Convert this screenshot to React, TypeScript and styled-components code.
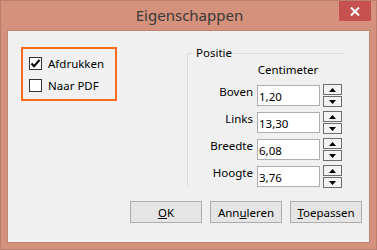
import React from 'react';
import styled, { createGlobalStyle } from 'styled-components';

const GlobalStyle = createGlobalStyle`
  html, body {
    margin: 0;
    padding: 0;
    background: #fff;
  }
  body {
    font-family: "Noto Sans", "Open Sans", sans-serif;
    font-size: 11.5px;
    color: #000;
  }
`;

const Window = styled.div`
  box-sizing: border-box;
  width: 377px;
  height: 250px;
  background: #d4917b;
  border: 1px solid #b97f6c;
  display: flex;
  flex-direction: column;
`;

const TitleBar = styled.div`
  position: relative;
  height: 29px;
  flex: none;
  display: flex;
  align-items: center;
  justify-content: center;
`;

const Title = styled.div`
  font-size: 15px;
  color: #3a3a3a;
  margin-top: -2px;
  margin-left: 2px;
`;

const CloseButton = styled.div`
  position: absolute;
  top: 0;
  right: 5px;
  width: 32px;
  height: 20px;
  background: #c75050;
  display: flex;
  align-items: center;
  justify-content: center;
`;

const Client = styled.div`
  flex: 1;
  margin: 0 6px 6px;
  background: #f0f0f0;
  border: 1px solid #bd8572;
  padding: 16px 7px 19px 13px;
  display: flex;
  flex-direction: column;
`;

const TopRow = styled.div`
  display: flex;
  align-items: flex-start;
`;

const Highlight = styled.div`
  box-sizing: border-box;
  width: 96px;
  height: 54px;
  border: 2px solid #f56b1c;
  padding: 8px 0 0 6px;
  display: flex;
  flex-direction: column;
  gap: 9px;
`;

const CheckRow = styled.label`
  display: flex;
  align-items: center;
  gap: 6px;
  height: 13px;
  white-space: nowrap;
`;

const Box = styled.span`
  box-sizing: border-box;
  width: 13px;
  height: 13px;
  border: 1px solid #333;
  background: #fff;
  display: flex;
  align-items: center;
  justify-content: center;
  flex: none;
`;

const Group = styled.fieldset`
  box-sizing: border-box;
  margin: -2px 0 0 70px;
  padding: 0;
  width: 157px;
  height: 142px;
  border: none;
  border-top: 1px solid #dcdcdc;
  border-left: 1px solid #dcdcdc;
  min-width: 0;
`;

const Legend = styled.legend`
  padding: 0 1px 0 2px;
  margin-left: 6px;
  line-height: 16px;
`;

const Fields = styled.div`
  display: grid;
  grid-template-columns: 66px 62px 19px;
  column-gap: 3px;
  row-gap: 5px;
  align-items: start;
`;

const Unit = styled.div`
  grid-column: 2 / 3;
  text-align: center;
  line-height: 16px;
  margin-top: 1px;
  margin-bottom: 2px;
  white-space: nowrap;
  justify-self: center;
`;

const Label = styled.div`
  grid-column: 1 / 2;
  text-align: right;
  line-height: 16px;
  margin-top: -1px;
  padding-right: 1px;
`;

const Input = styled.input`
  box-sizing: border-box;
  width: 63px;
  height: 21px;
  margin: 0;
  padding: 2px 0 0 1px;
  border: 1px solid #abadb3;
  background: #fff;
  font: inherit;
  color: #000;
  outline: none;
`;

const Spin = styled.div`
  display: flex;
  flex-direction: column;
  gap: 1px;
  margin-top: -1px;
  margin-left: 1px;
`;

const SpinButton = styled.div`
  box-sizing: border-box;
  width: 19px;
  height: 11px;
  border: 1px solid #6d6d6d;
  background: #f3f3f3;
  display: flex;
  align-items: center;
  justify-content: center;
`;

const ButtonRow = styled.div`
  margin-top: auto;
  display: flex;
  justify-content: flex-end;
  gap: 8px;
`;

const Button = styled.button`
  box-sizing: border-box;
  width: 72px;
  height: 22px;
  margin: 0;
  padding: 0;
  border: 1px solid #acacac;
  background: #e5e5e5;
  font: inherit;
  color: #000;
`;

const Check = () => (
  <svg width="11" height="11" viewBox="0 0 11 11">
    <path d="M1.5 5.5 L4 8.2 L9.5 2" fill="none" stroke="#000" strokeWidth="2" />
  </svg>
);

const Arrow: React.FC<{ down?: boolean }> = ({ down }) => (
  <svg width="7" height="4" viewBox="0 0 7 4">
    <path d={down ? 'M0 0 H7 L3.5 4 Z' : 'M0 4 H7 L3.5 0 Z'} fill="#000" />
  </svg>
);

const rows = [
  { label: 'Boven', value: '1,20' },
  { label: 'Links', value: '13,30' },
  { label: 'Breedte', value: '6,08' },
  { label: 'Hoogte', value: '3,76' },
];

const App: React.FC = () => {
  return (
    <>
      <GlobalStyle />
      <Window>
        <TitleBar>
          <Title>Eigenschappen</Title>
          <CloseButton>
            <svg width="10" height="9" viewBox="0 0 10 9">
              <path d="M1 0.5 L9 8.5 M9 0.5 L1 8.5" stroke="#fff" strokeWidth="2" />
            </svg>
          </CloseButton>
        </TitleBar>
        <Client>
          <TopRow>
            <Highlight>
              <CheckRow>
                <Box><Check /></Box>
                Afdrukken
              </CheckRow>
              <CheckRow>
                <Box />
                Naar PDF
              </CheckRow>
            </Highlight>
            <Group>
              <Legend>Positie</Legend>
              <Fields>
                <Unit>Centimeter</Unit>
                {rows.map((r) => (
                  <React.Fragment key={r.label}>
                    <Label>{r.label}</Label>
                    <Input type="text" value={r.value} readOnly />
                    <Spin>
                      <SpinButton><Arrow /></SpinButton>
                      <SpinButton><Arrow down /></SpinButton>
                    </Spin>
                  </React.Fragment>
                ))}
              </Fields>
            </Group>
          </TopRow>
          <ButtonRow>
            <Button><u>O</u>K</Button>
            <Button>Ann<u>u</u>leren</Button>
            <Button><u>T</u>oepassen</Button>
          </ButtonRow>
        </Client>
      </Window>
    </>
  );
};

export default App;
